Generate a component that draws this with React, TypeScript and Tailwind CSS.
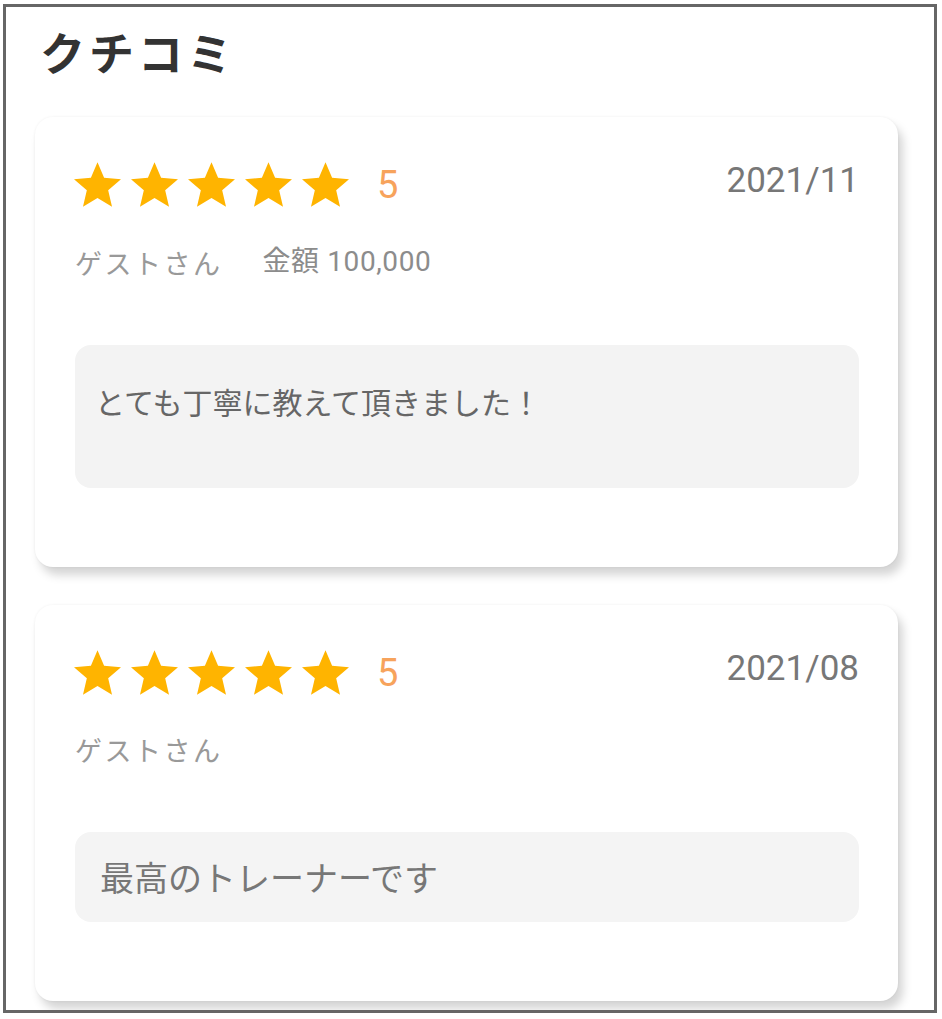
const jp = { fontFamily: '"Noto Sans CJK JP", sans-serif' }
const num = { fontFamily: 'Roboto, "Noto Sans CJK JP", sans-serif' }

function Star() {
  return (
    <svg className="h-[45px] w-[47px]" viewBox="2 2 20 19" fill="#ffb400">
      <path d="M12 17.27L18.18 21l-1.64-7.03L22 9.24l-7.19-.61L12 2 9.19 8.63 2 9.24l5.46 4.73L5.82 21z" />
    </svg>
  )
}

type Review = {
  rating: number
  date: string
  name: string
  amount?: string
  comment: string
}

function ReviewCard({ review, first }: { review: Review; first: boolean }) {
  return (
    <div className="w-[863px] rounded-[18px] bg-white pb-[79px] pl-[40px] pr-[39px] pt-[45px] shadow-[5px_8px_10px_rgba(0,0,0,0.17),0_0_3px_rgba(0,0,0,0.06)]">
      {/* Rating row */}
      <div className="flex items-center justify-between">
        <div className="flex items-center">
          <div className="-ml-[1px] flex gap-[10px]">
            {Array.from({ length: review.rating }).map((_, i) => (
              <Star key={i} />
            ))}
          </div>
          <span className="ml-[28px] text-[38px] leading-none text-[#f7a35c]" style={num}>
            {review.rating}
          </span>
        </div>
        <span className="-mt-[8px] text-[35px] leading-none text-[#777]" style={num}>
          {review.date}
        </span>
      </div>

      {/* Name / amount */}
      <div className="mt-[41px] flex items-center text-[27px] leading-none text-[#999]" style={jp}>
        <span className="tracking-[2.5px]">{review.name}</span>
        {review.amount && (
          <span className="ml-[40px] text-[28px] tracking-[0.6px] text-[#8c8c8c]" style={num}>
            金額 {review.amount}
          </span>
        )}
      </div>

      {/* Comment */}
      {first ? (
        <div className="mt-[69px] h-[143px] rounded-[16px] bg-[#f3f3f3] pl-[20px] pt-[41px]">
          <p className="text-[30px] leading-none text-[#666]" style={jp}>
            {review.comment}
          </p>
        </div>
      ) : (
        <div className="mt-[69px] flex h-[90px] items-center rounded-[16px] bg-[#f4f4f4] pl-[25px]">
          <p className="text-[34px] leading-none text-[#777]" style={jp}>
            {review.comment}
          </p>
        </div>
      )}
    </div>
  )
}

const reviews: Review[] = [
  { rating: 5, date: '2021/11', name: 'ゲストさん', amount: '100,000', comment: 'とても丁寧に教えて頂きました！' },
  { rating: 5, date: '2021/08', name: 'ゲストさん', comment: '最高のトレーナーです' },
]

export default function App() {
  return (
    <div className="h-[1019px] w-[942px] overflow-hidden bg-white pl-[3px] pt-[4px]">
      <div className="h-[1009px] w-[934px] overflow-hidden border-[3px] border-[#666] pl-[29px]">
        <h1
          className="pl-[5px] pt-[22px] text-[45px] font-bold leading-none tracking-[4px] text-[#333]"
          style={jp}
        >
          クチコミ
        </h1>

        <div className="mt-[43px] flex flex-col gap-[38px]">
          {reviews.map((r, i) => (
            <ReviewCard key={i} review={r} first={i === 0} />
          ))}
        </div>
      </div>
    </div>
  )
}
